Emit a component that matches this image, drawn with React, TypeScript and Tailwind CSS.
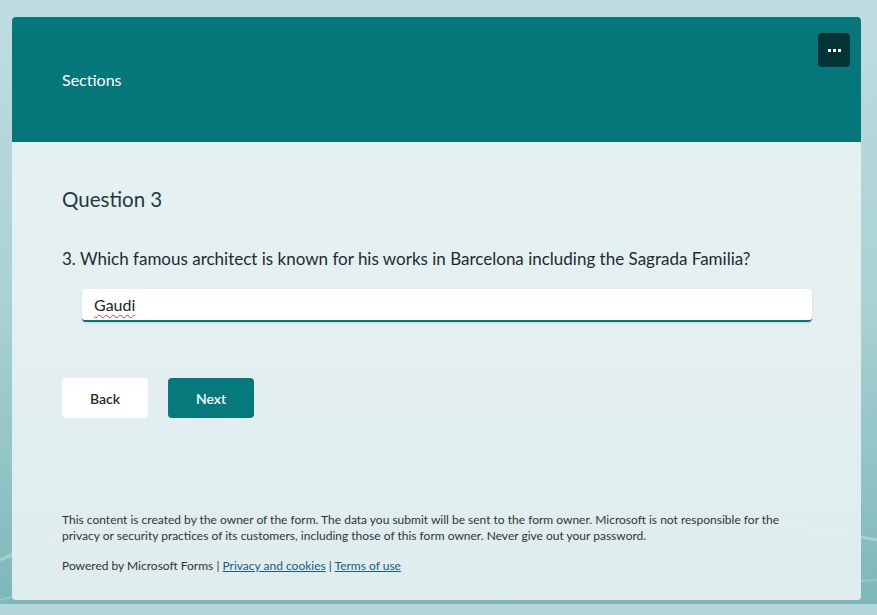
import React from 'react';

const font = { fontFamily: '"Segoe UI", Lato, "Noto Sans", sans-serif' };

const MoreButton: React.FC = () => (
    <button
        className="flex h-[34px] w-[32px] items-center justify-center gap-[2px] rounded-[4px] bg-[#043336]"
        aria-label="More options"
    >
        <span className="h-[3px] w-[3px] bg-white" />
        <span className="h-[3px] w-[3px] bg-white" />
        <span className="h-[3px] w-[3px] bg-white" />
    </button>
);

const App: React.FC = () => {
    return (
        <div
            className="relative h-[615px] w-full overflow-hidden bg-gradient-to-b from-[#bfdde0] via-[#a9d1d3] to-[#7cb7b9]"
            style={font}
        >
            {/* soft waves behind the card */}
            <svg className="absolute inset-0 h-full w-full" viewBox="0 0 877 615" preserveAspectRatio="none">
                <path d="M0 560 C 200 470, 500 470, 877 540" stroke="#ffffff" strokeOpacity="0.3" strokeWidth="3" fill="none" />
                <path d="M0 600 C 300 520, 600 600, 877 580" stroke="#ffffff" strokeOpacity="0.2" strokeWidth="2" fill="none" />
                <rect x="0" y="604" width="877" height="11" fill="#b4d8da" />
            </svg>

            <div className="relative ml-[12px] mt-[17px] flex h-[583px] w-[849px] flex-col overflow-hidden rounded-[4px] bg-gradient-to-b from-[#e7f1f2] to-[#e3eff0]/95">
                {/* header */}
                <div className="relative flex h-[125px] shrink-0 items-center bg-[#05777b] px-[50px]">
                    <span className="text-[16px] text-white">Sections</span>
                    <div className="absolute right-[11px] top-[16px]">
                        <MoreButton />
                    </div>
                </div>

                {/* question */}
                <div className="px-[50px] pt-[43px]">
                    <h1 className="text-[20.5px] leading-[28px] text-[#1d3a44]">Question 3</h1>
                    <p className="mt-[35px] text-[17px] leading-[22px] text-[#1f2a30]">
                        3. Which famous architect is known for his works in Barcelona including the Sagrada Familia?
                    </p>
                    <div className="ml-[20px] mr-[-1px] mt-[19px] flex h-[33px] items-center rounded-[4px] border-b-2 border-[#05777b] bg-white px-[12px] shadow-[0_1px_2px_rgba(0,0,0,0.12)]">
                        <span className="text-[16px] text-[#222] underline decoration-[#e0393e] decoration-wavy decoration-1 underline-offset-[3px]">
                            Gaudi
                        </span>
                    </div>
                    <div className="mt-[56px] flex gap-[20px]">
                        <button className="h-[40px] w-[86px] rounded-[4px] bg-white text-[14px] font-semibold text-[#2b2b2b]">
                            Back
                        </button>
                        <button className="h-[40px] w-[86px] rounded-[4px] bg-[#06797c] text-[14px] font-semibold text-white">
                            Next
                        </button>
                    </div>
                </div>

                {/* footer */}
                <div className="mt-auto px-[50px] pb-[26px] text-[12px] leading-[16px] text-[#333]">
                    <p>
                        This content is created by the owner of the form. The data you submit will be sent to the form owner. Microsoft is not responsible for the privacy or security practices of its customers, including those of this form owner. Never give out your password.
                    </p>
                    <p className="mt-[14px]">
                        Powered by Microsoft Forms |{' '}
                        <a className="text-[#1c5a8a] underline" href="#">Privacy and cookies</a> |{' '}
                        <a className="text-[#1c5a8a] underline" href="#">Terms of use</a>
                    </p>
                </div>
            </div>
        </div>
    );
};

export default App;
